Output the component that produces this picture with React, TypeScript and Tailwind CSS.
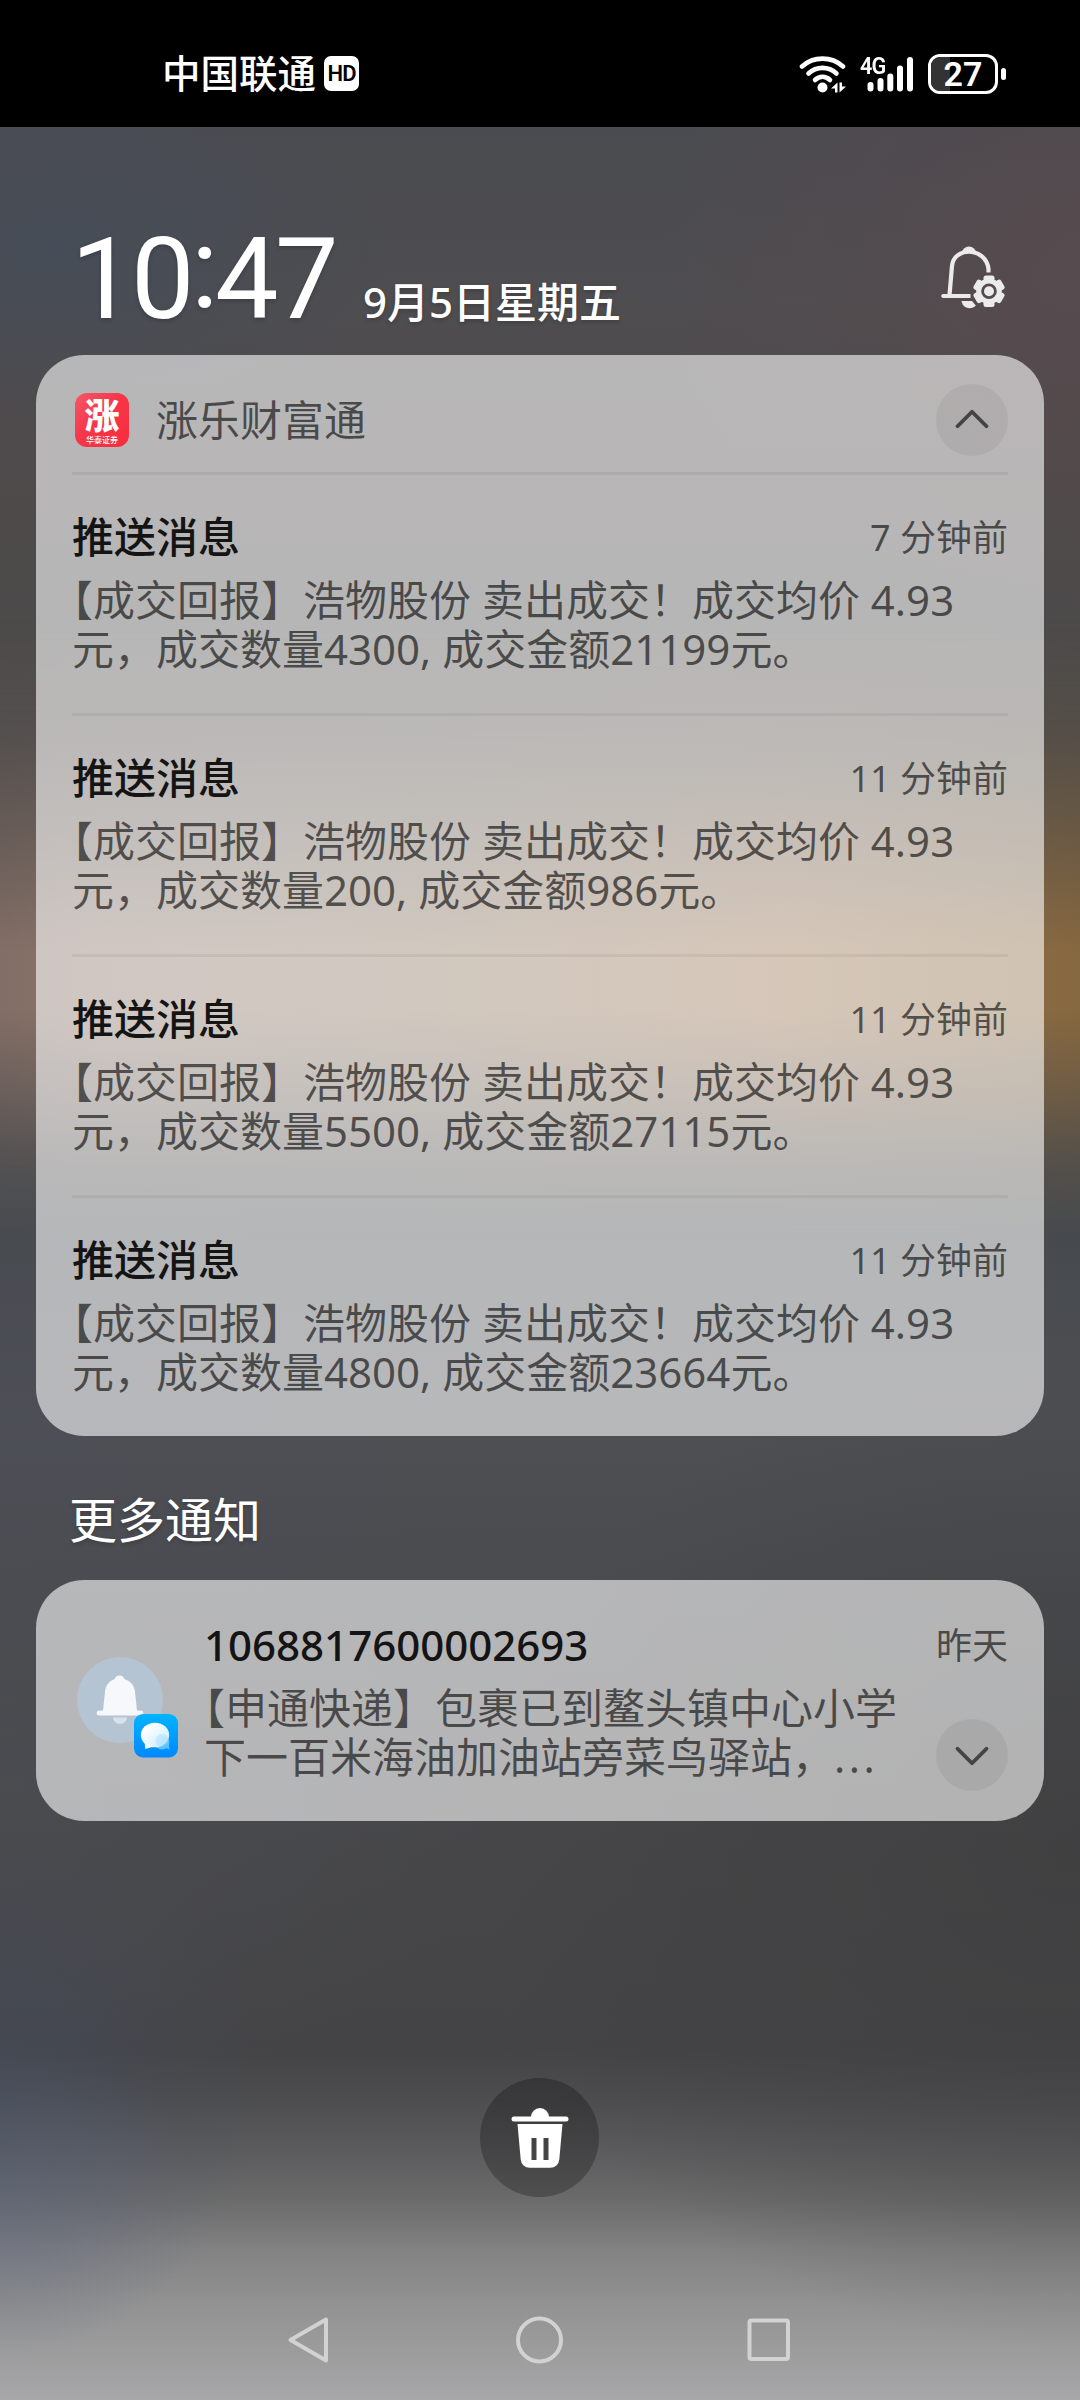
import { ChevronDown, ChevronUp } from 'lucide-react';

interface PushMessage {
  id: number;
  time: string;
  lines: [string, string];
}

const messages: PushMessage[] = [
  {
    id: 1,
    time: '7 分钟前',
    lines: ['【成交回报】浩物股份 卖出成交！成交均价 4.93', '元，成交数量4300, 成交金额21199元。'],
  },
  {
    id: 2,
    time: '11 分钟前',
    lines: ['【成交回报】浩物股份 卖出成交！成交均价 4.93', '元，成交数量200, 成交金额986元。'],
  },
  {
    id: 3,
    time: '11 分钟前',
    lines: ['【成交回报】浩物股份 卖出成交！成交均价 4.93', '元，成交数量5500, 成交金额27115元。'],
  },
  {
    id: 4,
    time: '11 分钟前',
    lines: ['【成交回报】浩物股份 卖出成交！成交均价 4.93', '元，成交数量4800, 成交金额23664元。'],
  },
];

function StatusBar() {
  return (
    <div className="flex h-[127px] shrink-0 items-start justify-between bg-black pr-[74px] pl-[162px] text-white">
      <div className="flex h-[147px] items-center gap-[8px]">
        <span className="text-[38.5px] leading-none font-medium">中国联通</span>
        <span className="flex h-[35px] w-[35px] items-center justify-center rounded-[7px] bg-white font-['Roboto'] text-[22px] leading-none font-semibold tracking-[-1px] text-black">
          HD
        </span>
      </div>
      <div className="flex h-[147px] items-center">
        <svg className="h-[38px] w-[48px]" viewBox="0 0 48 38" fill="none">
          <g stroke="white" strokeWidth="4.6" strokeLinecap="round">
            <path d="M3 11.5C14.5 1 32.500 1 44 11.500" />
            <path d="M9.500 18.500C17.500 11 29.500 11 37.500 18.500" />
            <path d="M16 25C20.500 20.800 26.500 20.800 31 25" />
          </g>
          <circle cx="23.500" cy="32.500" r="5" fill="white" />
          <path d="M32 33.500L38.500 27.500v10h-2.500v-4zM40.500 37.500v-10h2.500v4h4z" fill="white" />
        </svg>
        <div className="relative ml-[13px] h-[38px] w-[54px]">
          <svg className="h-[38px] w-[54px]" viewBox="0 0 54 38">
            <g stroke="white" strokeWidth="6" strokeLinecap="round">
              <path d="M10.500 30v3.500M20.500 26v7.500M30.300 21.500v12M40 13.500v20M50 5v28.500" />
            </g>
          </svg>
          <span className="absolute -top-px left-0 origin-left scale-x-90 font-['Roboto'] text-[24px] leading-[24px] font-semibold tracking-[-1px]">
            4G
          </span>
        </div>
        <div className="relative ml-[14px] flex h-[40px] w-[70px] items-center justify-center rounded-[12px] border-[3px] border-white">
          <div className="absolute inset-y-0 left-0 w-[19px] rounded-l-[9px] bg-[#333]" />
          <span className="relative font-['Roboto'] text-[34px] leading-[34px] font-semibold">27</span>
        </div>
        <div className="ml-[3px] h-[12px] w-[5px] rounded-full bg-white" />
      </div>
    </div>
  );
}

function BellSettingsIcon() {
  return (
    <svg className="h-[66px] w-[66px]" viewBox="0 0 66 66" fill="none">
      <path
        d="M9.500 50L12 21C13.500 1.500 46 1.500 48.500 24v3.500M3 51h27.500"
        stroke="#ebebeb"
        strokeWidth="4.200"
      />
      <path d="M22 8a7 6.500 0 0 1 14 0z" fill="#ebebeb" />
      <circle cx="3.300" cy="51" r="2.100" fill="#ebebeb" />
      <path d="M21.500 56h10.500l3.800 4.500c-4 4.500-13 3.500-14.300-4.500z" fill="#ebebeb" />
      <g transform="translate(49 46.300)">
        <circle r="10.300" stroke="#ebebeb" strokeWidth="5" />
        <g fill="#ebebeb">
          <rect x="-5.500" y="-15.800" width="11" height="6" rx="2.500" />
          <rect x="-5.500" y="-15.800" width="11" height="6" rx="2.500" transform="rotate(60)" />
          <rect x="-5.500" y="-15.800" width="11" height="6" rx="2.500" transform="rotate(120)" />
          <rect x="-5.500" y="-15.800" width="11" height="6" rx="2.500" transform="rotate(180)" />
          <rect x="-5.500" y="-15.800" width="11" height="6" rx="2.500" transform="rotate(240)" />
          <rect x="-5.500" y="-15.800" width="11" height="6" rx="2.500" transform="rotate(300)" />
          <circle r="5" />
        </g>
      </g>
    </svg>
  );
}

function PanelHeader() {
  return (
    <div className="flex h-[228px] shrink-0 items-end justify-between pr-[74px] pb-[19px] pl-[71px] text-white">
      <div className="flex items-baseline [text-shadow:0_2px_4px_rgba(0,0,0,0.2)]">
        <div className="flex font-['Roboto'] text-[113px] leading-[113px] tracking-[-3.500px]">
          <span>10</span>
          <span className="-mt-[11px] mb-[11px]">:</span>
          <span>47</span>
        </div>
        <span className="ml-[28px] text-[42px] leading-[50px] font-medium">9月5日星期五</span>
      </div>
      <div className="mb-[25px]">
        <BellSettingsIcon />
      </div>
    </div>
  );
}

function AppLogo() {
  return (
    <div className="flex h-[54px] w-[54px] flex-col items-center overflow-hidden rounded-[12px] bg-[linear-gradient(135deg,#f4586a_0%,#f6364a_45%,#f92c3c_100%)] text-white">
      <span className="mt-[4px] text-[35px] leading-[37px] font-black">涨</span>
      <span className="mt-px text-[8px] leading-[9px] font-medium">华泰证券</span>
    </div>
  );
}

function MessageItem({ message }: { message: PushMessage }) {
  return (
    <div className="h-[241px] border-t-[3px] border-black/5 pt-[34px]">
      <div className="flex h-[56px] items-start justify-between leading-[56px]">
        <h3 className="text-[42px] font-medium text-[#141414]">推送消息</h3>
        <span className="pt-px text-[36px] text-black/60">{message.time}</span>
      </div>
      <p className="mt-[10px] text-[42px] leading-[49px] whitespace-pre text-black/60">
        <span className="-ml-[21px] block [text-spacing-trim:space-all]">{message.lines[0]}</span>
        <span className="block">{message.lines[1]}</span>
      </p>
    </div>
  );
}

function NotificationGroup() {
  return (
    <section className="mx-9 shrink-0 rounded-[48px] bg-white/60 px-9">
      <div className="flex h-[117px] items-center pt-[13px]">
        <div className="ml-[3px]">
          <AppLogo />
        </div>
        <span className="ml-[27px] flex-1 text-[42px] leading-[56px] text-black/60">涨乐财富通</span>
        <button className="flex h-[72px] w-[72px] items-center justify-center rounded-full bg-black/5">
          <ChevronUp className="mb-[2px] h-[58px] w-[58px] text-[#444]" strokeWidth={1.6} />
        </button>
      </div>
      {messages.map((message) => (
        <MessageItem key={message.id} message={message} />
      ))}
    </section>
  );
}

function SmsAvatar() {
  return (
    <svg className="h-[104px] w-[104px]" viewBox="0 0 104 104" fill="none">
      <defs>
        <linearGradient id="badge" x1="0" y1="0" x2="0" y2="1">
          <stop offset="0" stopColor="#00b4ff" />
          <stop offset="1" stopColor="#0088ff" />
        </linearGradient>
        <linearGradient id="bubble" x1="0" y1="0" x2="1" y2="1">
          <stop offset="0.200" stopColor="#ffffff" />
          <stop offset="1" stopColor="#c4eaff" />
        </linearGradient>
      </defs>
      <circle cx="44" cy="44" r="43" fill="#b4c4d2" />
      <path
        d="M43.500 19.500c-3 0-4.500 2-4.800 3.500-6 2-9.200 7-9.700 13l-2 18.500h-3.800a2.500 2.500 0 0 0 0 5h41.600a2.500 2.500 0 0 0 0-5h-3.800l-2-18.500c-.5-6-4-11-10.700-13-.3-1.500-1.800-3.500-4.800-3.500z"
        fill="#f6f8fb"
      />
      <path d="M37 61.500h14a7 6.500 0 0 1-14 0z" fill="#d9e2ea" />
      <rect x="58" y="58" width="44" height="43.500" rx="9" fill="url(#badge)" />
      <circle cx="86" cy="86" r="7.500" fill="#5cc2ff" />
      <path d="M87 91l6.500 2.500-1-7z" fill="#5cc2ff" />
      <ellipse cx="79" cy="79" rx="14.200" ry="12.300" fill="url(#bubble)" />
      <path d="M68.500 85.500l.8 7.500 8.500-2.500z" fill="#f0faff" />
      <circle cx="86" cy="84.500" r="6.500" fill="#8fd6ff" opacity="0.350" />
    </svg>
  );
}

function SmsNotification() {
  return (
    <section className="mx-9 flex h-[241px] shrink-0 rounded-[48px] bg-white/60 px-9">
      <div className="mt-[76px] ml-[4px] w-[104px]">
        <SmsAvatar />
      </div>
      <div className="ml-[24px] flex-1 pt-[38px] whitespace-pre">
        <h3 className="text-[42px] leading-[54px] font-medium text-[#141414]">1068817600002693</h3>
        <p className="mt-[11px] text-[42px] leading-[49px] text-black/60">
          <span className="-ml-[21px] block [text-spacing-trim:space-all]">【申通快递】包裹已到鳌头镇中心小学</span>
          <span className="block">
            下一百米海油加油站旁菜鸟驿站，<span className="tracking-[3.500px]">...</span>
          </span>
        </p>
      </div>
      <div className="flex flex-col items-end pt-[38px]">
        <span className="text-[36px] leading-[56px] text-black/60">昨天</span>
        <button className="mt-[45px] flex h-[72px] w-[72px] items-center justify-center rounded-full bg-black/5">
          <ChevronDown className="mt-px h-[58px] w-[58px] text-[#444]" strokeWidth={1.6} />
        </button>
      </div>
    </section>
  );
}

function ClearButton() {
  return (
    <button className="mt-[257px] mr-px flex h-[119px] w-[119px] shrink-0 items-center justify-center self-center rounded-full bg-black/25">
      <svg className="h-[60px] w-[58px]" viewBox="0 0 58 60">
        <path d="M20 9a9 9 0 0 1 18 0z" fill="white" />
        <rect x="0.500" y="8.500" width="57" height="5" rx="2.500" fill="white" />
        <path
          d="M6.500 16h45l-3.200 35.500a9 9 0 0 1-9 8.300h-20.600a9 9 0 0 1-9-8.300zM20.500 30v22h5V30zM32.500 30v22h5V30z"
          fill="white"
          fillRule="evenodd"
        />
      </svg>
    </button>
  );
}

function NavBar() {
  return (
    <nav className="mt-auto mr-[2px] flex h-[120px] shrink-0 items-center justify-center gap-[182px]">
      {/* Back */}
      <svg className="h-12 w-12" viewBox="0 0 48 48" fill="none" stroke="#d2d2d2" strokeWidth="4">
        <path d="M41 3.500v41L5.500 24z" strokeLinejoin="round" />
      </svg>
      {/* Home */}
      <svg className="h-12 w-12" viewBox="0 0 48 48" fill="none" stroke="#d2d2d2" strokeWidth="4">
        <circle cx="24.500" cy="24" r="21.500" />
      </svg>
      {/* Recents */}
      <svg className="h-12 w-12" viewBox="0 0 48 48" fill="none" stroke="#d2d2d2" strokeWidth="4">
        <rect x="4.500" y="4.500" width="38.500" height="38.500" rx="2" />
      </svg>
    </nav>
  );
}

export default function App() {
  return (
    <div className="relative isolate flex h-[2400px] w-[1080px] flex-col overflow-hidden font-['Noto_Sans','Noto_Sans_CJK_SC',sans-serif]">
      {/* Blurred wallpaper */}
      <div className="absolute inset-0 -z-20 bg-[radial-gradient(ellipse_330px_180px_at_60px_250px,rgba(66,76,92,0.6),transparent),radial-gradient(ellipse_420px_340px_at_1080px_260px,rgba(92,73,77,0.6),transparent),radial-gradient(ellipse_260px_260px_at_0px_2090px,rgba(66,78,100,0.4),transparent),radial-gradient(ellipse_200px_160px_at_0px_2200px,rgba(110,118,145,0.35),transparent),radial-gradient(ellipse_500px_260px_at_0px_1420px,rgba(76,78,88,0.6),transparent),radial-gradient(ellipse_500px_300px_at_0px_1800px,rgba(76,78,84,0.6),transparent),radial-gradient(ellipse_600px_500px_at_1080px_1850px,rgba(62,62,63,0.7),transparent),linear-gradient(to_bottom,#4a4b50_127px,#4e4d50_300px,#4f4a4b_450px,#4c4a4a_620px,#4a4949_900px,#464a4e_1230px,#4e4f53_1430px,#4a4b4f_1600px,#464648_1850px,#444446_2050px,#4d4d4f_2100px,#5b5b5d_2150px,#6b6b6b_2200px,#828283_2250px,#919191_2300px,#9c9c9d_2350px,#a7a7a9_2400px)]" />
      <div className="absolute inset-0 -z-10 bg-[linear-gradient(to_right,#826e66_0px,#8a7468_100px,#8c7660_420px,#987250_780px,#866840_1080px)] [mask-image:linear-gradient(to_bottom,transparent_620px,rgba(0,0,0,0.18)_740px,rgba(0,0,0,0.55)_840px,black_950px,black_1010px,rgba(0,0,0,0.62)_1090px,rgba(0,0,0,0.22)_1160px,transparent_1240px)]" />

      <StatusBar />
      <PanelHeader />
      <NotificationGroup />
      <h2 className="h-[144px] shrink-0 pt-6 pl-[69px] text-[48px] leading-[120px] text-white [text-shadow:0_2px_4px_rgba(0,0,0,0.2)]">
        更多通知
      </h2>
      <SmsNotification />
      <ClearButton />
      <NavBar />
    </div>
  );
}
